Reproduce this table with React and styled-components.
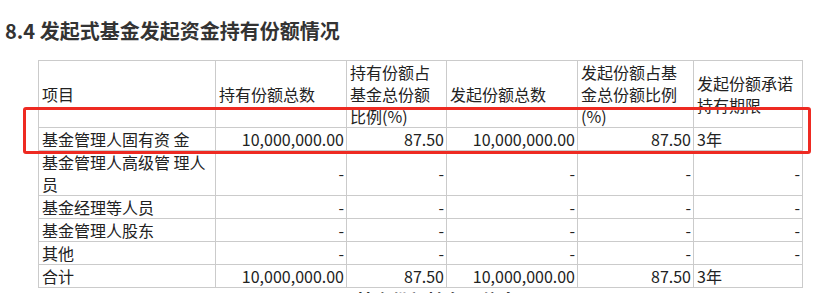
import React from "react";
import styled, { createGlobalStyle } from "styled-components";

const GlobalStyle = createGlobalStyle`
  html, body {
    margin: 0;
    padding: 0;
    background: #fff;
    overflow: hidden;
  }

  body {
    font-family: "Noto Sans CJK SC", "Noto Sans", sans-serif;
    color: #222;
  }
`;

const Page = styled.div`
  position: relative;
  padding: 18px 0 0 5px;
  width: 826px;
  height: 293px;
  box-sizing: border-box;
`;

const Title = styled.h3`
  color: #333;
  font-size: 20px;
  font-weight: 700;
  line-height: 26px;
  margin: 0 0 16px;
`;

const Table = styled.table`
  border-collapse: collapse;
  font-size: 16px;
  line-height: 22px;
  margin-left: 33px;
  table-layout: fixed;
  width: 764px;
`;

const Col = styled.col`
  width: ${(p) => p.$w}px;
`;

const Cell = styled.td`
  border: 1px solid #cbcbcb;
  padding: 0 2px 0 3px;
  text-align: ${(p) => (p.$num ? "right" : "left")};
  vertical-align: middle;
  white-space: nowrap;
`;

const HeadCell = styled(Cell)`
  font-weight: 400;
`;

const Caption = styled.div`
  color: #333;
  font-size: 18px;
  font-weight: 700;
  line-height: 22px;
  margin-top: 1px;
  text-align: center;
  width: 764px;
  margin-left: 33px;
`;

const Highlight = styled.div`
  border: 3px solid #ee2a22;
  border-radius: 3px;
  box-sizing: border-box;
  height: 47px;
  left: 23px;
  pointer-events: none;
  position: absolute;
  top: 107px;
  width: 788px;
`;

const widths = [177, 131, 100, 131, 116, 109];

const rows = [
  ["基金管理人固有资 金", "10,000,000.00", "87.50", "10,000,000.00", "87.50", "3年"],
  [["基金管理人高级管 理人", "员"], "-", "-", "-", "-", "-"],
  ["基金经理等人员", "-", "-", "-", "-", "-"],
  ["基金管理人股东", "-", "-", "-", "-", "-"],
  ["其他", "-", "-", "-", "-", "-"],
  ["合计", "10,000,000.00", "87.50", "10,000,000.00", "87.50", "3年"],
];

const lines = (value) =>
  Array.isArray(value)
    ? value.map((line, i) => (
        <React.Fragment key={i}>
          {i > 0 && <br />}
          {line}
        </React.Fragment>
      ))
    : value;

export default function App() {
  return (
    <Page>
      <GlobalStyle />
      <Title>8.4 发起式基金发起资金持有份额情况</Title>
      <Table>
        <colgroup>
          {widths.map((w, i) => (
            <Col key={i} $w={w} />
          ))}
        </colgroup>
        <thead>
          <tr>
            <HeadCell as="th">项目</HeadCell>
            <HeadCell as="th">持有份额总数</HeadCell>
            <HeadCell as="th">
              持有份额占
              <br />
              基金总份额
              <br />
              比例(%)
            </HeadCell>
            <HeadCell as="th">发起份额总数</HeadCell>
            <HeadCell as="th">
              发起份额占基
              <br />
              金总份额比例
              <br />
              (%)
            </HeadCell>
            <HeadCell as="th">
              发起份额承诺
              <br />
              持有期限
            </HeadCell>
          </tr>
        </thead>
        <tbody>
          {rows.map((row, r) => (
            <tr key={r}>
              {row.map((value, c) => (
                <Cell key={c} $num={(c > 0 && c < 5) || value === "-"}>
                  {lines(value)}
                </Cell>
              ))}
            </tr>
          ))}
        </tbody>
      </Table>
      <Caption>§9 基金份额持有人信息</Caption>
      <Highlight />
    </Page>
  );
}
